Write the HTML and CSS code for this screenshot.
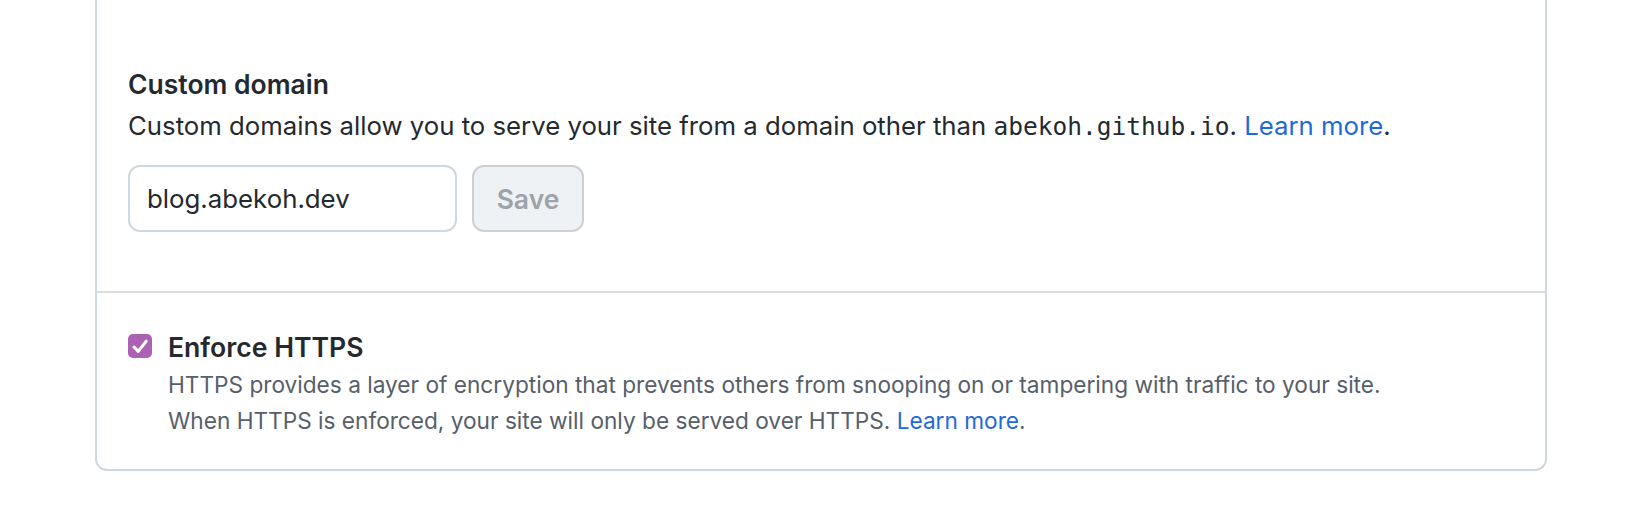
FILE: index.html
```html
<!DOCTYPE html>
<html lang="en">
<head>
<meta charset="utf-8">
<title>Custom domain</title>
<link rel="stylesheet" href="styles.css">
</head>
<body>
<div class="box">
  <section class="row row-domain">
    <h3 class="title">Custom domain</h3>
    <p class="desc">Custom domains allow you to serve your site from a domain other than <code class="mono">abekoh.github.io</code>. <a class="link" href="#">Learn more</a>.</p>
    <form class="domain-form">
      <input class="input" type="text" value="blog.abekoh.dev">
      <button class="btn" type="button" disabled>Save</button>
    </form>
  </section>
  <section class="row row-https">
    <div class="check">
      <span class="checkbox">
        <svg width="24" height="24" viewBox="0 0 24 24"><path d="M6 13 L10.2 17.4 L18.2 7.2" fill="none" stroke="#fff" stroke-width="3" stroke-linecap="round" stroke-linejoin="round"/></svg>
      </span>
      <div class="check-body">
        <div class="check-title">Enforce HTTPS</div>
        <p class="note">HTTPS provides a layer of encryption that prevents others from snooping on or tampering with traffic to your site.<br>When HTTPS is enforced, your site will only be served over HTTPS. <a class="link" href="#">Learn more</a>.</p>
      </div>
    </div>
  </section>
</div>
</body>
</html>
```
FILE: styles.css
```css
* { box-sizing: border-box; }
html, body { margin: 0; padding: 0; background: #fff; }
body {
  font-family: Inter, "Liberation Sans", sans-serif;
  color: #24292f;
}
.box {
  margin-left: 95px;
  width: 1452px;
  border: 2px solid #d0d7de;
  border-top: 0;
  border-radius: 0 0 12px 12px;
}
.row { padding-left: 31px; padding-right: 31px; }
.row-domain { padding-top: 63px; padding-bottom: 59px; }
.row-https { border-top: 2px solid #d8dee4; padding-top: 34px; padding-bottom: 30px; }
.title {
  margin: 0;
  font-size: 26.5px;
  line-height: 42px;
  font-weight: 600;
}
.desc {
  margin: 0;
  font-size: 25.75px;
  line-height: 42px;
}
.mono {
  font-family: "DejaVu Sans Mono", "Liberation Mono", monospace;
  font-size: 24.5px;
}
.link { color: #1f6ad9; text-decoration: none; }
.domain-form { display: flex; gap: 15px; margin-top: 17px; }
.input {
  width: 329px;
  height: 67px;
  padding: 0 17px;
  border: 2px solid #d0d7de;
  border-radius: 12px;
  font-family: inherit;
  font-size: 25.8px;
  color: #24292f;
  background: #fff;
  outline: none;
}
.btn {
  width: 112px;
  height: 67px;
  border: 2px solid #ccd0d5;
  border-radius: 12px;
  background: #eff2f5;
  color: #9ca3aa;
  font-family: inherit;
  font-size: 26.5px;
  font-weight: 600;
  padding: 0;
}
.check { display: flex; gap: 16px; align-items: flex-start; }
.checkbox {
  flex: none;
  width: 24px;
  height: 24px;
  margin-top: 7px;
  border-radius: 5px;
  background: #ac62b3;
  display: flex;
}
.check-title {
  font-size: 26.6px;
  line-height: 40px;
  font-weight: 600;
}
.note {
  margin: 0;
  font-size: 22.65px;
  line-height: 36px;
  color: #57606a;
}
```
